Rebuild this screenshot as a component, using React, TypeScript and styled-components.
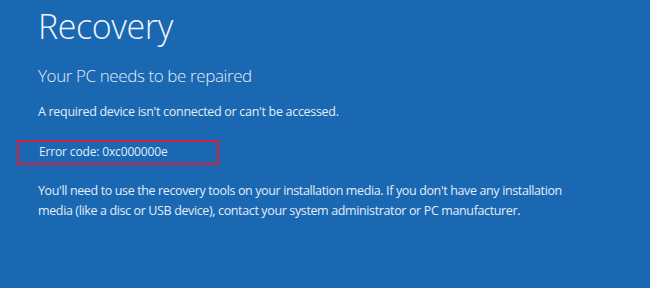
import React from "react";
import styled, { createGlobalStyle } from "styled-components";

const Global = createGlobalStyle`
  html, body { margin: 0; padding: 0; background: #1a68b2; }
  * { box-sizing: border-box; }
`;

const Screen = styled.main`
  width: 650px;
  height: 288px;
  background: #1a68b2;
  color: #e3edf9;
  font-family: "Open Sans", "Noto Sans", sans-serif;
  padding: 6px 0 0 38px;
  display: flex;
  flex-direction: column;
  align-items: flex-start;
  overflow: hidden;
`;

const Title = styled.h1`
  margin: 0;
  font-size: 34px;
  font-weight: 300;
  line-height: 40px;
  letter-spacing: -0.4px;
  color: #eef4fc;
`;

const Subtitle = styled.h2`
  margin: 19px 0 0 0;
  font-size: 17px;
  font-weight: 300;
  line-height: 22px;
  letter-spacing: -0.4px;
`;

const Text = styled.p<{ $top: number }>`
  margin: ${(p) => p.$top}px 0 0 0;
  font-size: 12.5px;
  font-weight: 400;
  line-height: 18px;
  letter-spacing: -0.3px;
`;

const ErrorBox = styled.div`
  margin: 19px 0 0 -21px;
  width: 202px;
  height: 25px;
  border: 2px solid #cf1f3d;
  padding: 0 0 2px 20px;
  display: flex;
  align-items: center;
`;

const ErrorText = styled.span`
  font-size: 12px;
  line-height: 16px;
  letter-spacing: -0.15px;
`;

const Paragraph = styled(Text)`
  max-width: 545px;
  line-height: 20px;
  letter-spacing: -0.37px;
`;

export default function App() {
  return (
    <>
      <Global />
      <Screen>
        <Title>Recovery</Title>
        <Subtitle>Your PC needs to be repaired</Subtitle>
        <Text $top={16}>A required device isn't connected or can't be accessed.</Text>
        <ErrorBox>
          <ErrorText>Error code: 0xc000000e</ErrorText>
        </ErrorBox>
        <Paragraph $top={16}>
          You'll need to use the recovery tools on your installation media. If you don't have any installation media (like a disc or USB device), contact your system administrator or PC manufacturer.
        </Paragraph>
      </Screen>
    </>
  );
}
